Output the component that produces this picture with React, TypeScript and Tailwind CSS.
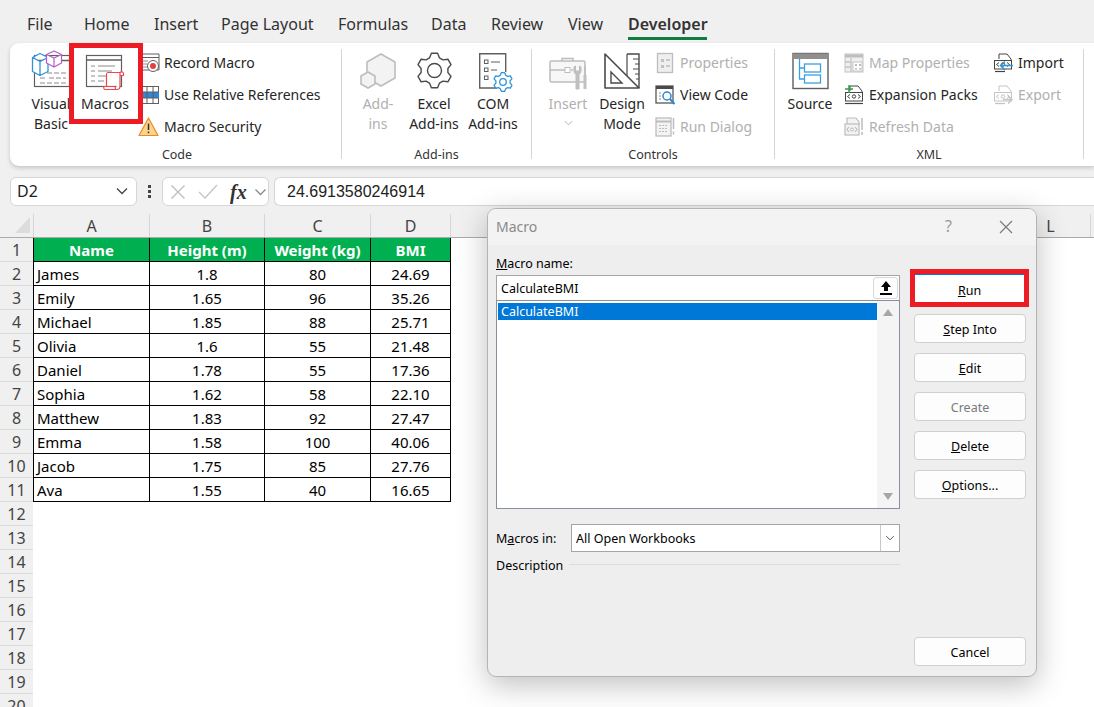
import React from 'react';

const font = "font-['Noto_Sans','Open_Sans',sans-serif]";
const cell = 'h-[24px] pt-[2px] leading-[21px] border-r border-b border-black';

const tabs = [
  { label: 'File', cls: 'w-[57px]' },
  { label: 'Home', cls: 'w-[70px]' },
  { label: 'Insert', cls: 'w-[67px]' },
  { label: 'Page Layout', cls: 'w-[117px]' },
  { label: 'Formulas', cls: 'w-[93px]' },
  { label: 'Data', cls: 'w-[60px]' },
  { label: 'Review', cls: 'w-[77px]' },
  { label: 'View', cls: 'w-[60px]' },
];

const columns = [
  { label: 'A', cls: 'w-[116px]' },
  { label: 'B', cls: 'w-[115px]' },
  { label: 'C', cls: 'w-[106px]' },
  { label: 'D', cls: 'w-[80px]' },
  { label: 'E', cls: 'w-[81px]' },
  { label: 'F', cls: 'w-[80px]' },
  { label: 'G', cls: 'w-[80px]' },
  { label: 'H', cls: 'w-[80px]' },
  { label: 'I', cls: 'w-[80px]' },
  { label: 'J', cls: 'w-[80px]' },
  { label: 'K', cls: 'w-[79px]' },
  { label: 'L', cls: 'w-[80px]' },
];

const people = [
  ['James', '1.8', '80', '24.69'],
  ['Emily', '1.65', '96', '35.26'],
  ['Michael', '1.85', '88', '25.71'],
  ['Olivia', '1.6', '55', '21.48'],
  ['Daniel', '1.78', '55', '17.36'],
  ['Sophia', '1.62', '58', '22.10'],
  ['Matthew', '1.83', '92', '27.47'],
  ['Emma', '1.58', '100', '40.06'],
  ['Jacob', '1.75', '85', '27.76'],
  ['Ava', '1.55', '40', '16.65'],
];

const rowNumbers = Array.from({ length: 20 }, (_, i) => i + 1);

function gearPath(cx: number, cy: number, ro: number, ri: number, n: number): string {
  const pts: string[] = [];
  const step = (Math.PI * 2) / n;
  for (let i = 0; i < n; i++) {
    const a = i * step - Math.PI / 2;
    const list: [number, number][] = [
      [ri, a - step * 0.36],
      [ro, a - step * 0.17],
      [ro, a + step * 0.17],
      [ri, a + step * 0.36],
    ];
    list.forEach(([r, t]) => pts.push(`${(cx + r * Math.cos(t)).toFixed(1)} ${(cy + r * Math.sin(t)).toFixed(1)}`));
  }
  return `M${pts.join('L')}Z`;
}

function Svg({ size = 38, children }: { size?: number; children: React.ReactNode }) {
  return (
    <svg width={size} height={size} viewBox={`0 0 ${size} ${size}`} fill="none" className="overflow-visible shrink-0">
      {children}
    </svg>
  );
}

function VisualBasicIcon() {
  return (
    <Svg>
      <rect x="2.5" y="3.5" width="35" height="31" fill="#fff" stroke="#5f5f5f" strokeWidth="1.2" />
      <path d="M2 8.5h36" stroke="#5f5f5f" strokeWidth="1.5" />
      <path d="M8 21h26M8 26h6M17 26h17M8 31h26" stroke="#8a8a8a" strokeDasharray="5 2" />
      <path d="M8 1.5l8 4v14l-8 4-7.5-4v-14zM.5 5.5l7.5 4 8-4M8 9.5v14" fill="#fff" stroke="#2f94d8" strokeWidth="1.3" strokeLinejoin="round" />
      <path d="M22-1l7.5 3.5v8.5L22 15l-7.5-4V2.5zM14.5 2.5L22 6l7.5-3.5M22 6v9" fill="#fff" stroke="#b35cc8" strokeWidth="1.2" strokeLinejoin="round" />
    </Svg>
  );
}

function MacrosIcon() {
  return (
    <Svg>
      <rect x=".5" y="3.5" width="35" height="31" fill="#fff" stroke="#5f5f5f" strokeWidth="1.2" />
      <path d="M0 8h36" stroke="#5f5f5f" strokeWidth="1.4" />
      <path d="M5 14h4M12 14h17M5 19h4M12 19h14M5 24h4M12 24h8M5 29h4M12 29h6" stroke="#8a8a8a" />
      <path d="M22 20.5h12v3h3.5v-1.5a2 2 0 0 0-3.5-1.5M34 24v10c0 2-1 3.5-3 3.5H19c-1.5 0-1.5-3-.5-3H28c1 0 1.5 1.5 1.5 3M22 20.5c-1 0-1.5 1-1.5 2v12" fill="#fff" stroke="#f0474d" strokeWidth="1.2" strokeLinejoin="round" />
    </Svg>
  );
}

function AddInsIcon() {
  return (
    <Svg>
      <path d="M22 2l14 8v16l-14 8-14-8V10z" fill="#f3f3f3" stroke="#bdbdbd" strokeWidth="1.6" />
      <path d="M9 20l7 4v8l-7 4-7-4v-8z" fill="#f3f3f3" stroke="#bdbdbd" strokeWidth="1.6" />
    </Svg>
  );
}

function GearIcon() {
  return (
    <Svg>
      <path d={gearPath(19.5, 18.5, 17.5, 13.5, 6)} fill="#fff" stroke="#4a4a4a" strokeWidth="1.4" strokeLinejoin="round" />
      <circle cx="19.5" cy="18.5" r="7" fill="#fff" stroke="#4a4a4a" strokeWidth="1.4" />
    </Svg>
  );
}

function ComIcon() {
  return (
    <Svg>
      <path d="M23 36H5.7V1.7h26V20" fill="#fff" stroke="#5f5f5f" strokeWidth="1.4" />
      <path d="M17 10h9M17 18h6" stroke="#5f5f5f" strokeWidth="1.2" />
      <rect x="10.5" y="8" width="3.5" height="3.5" stroke="#5f5f5f" />
      <rect x="10.5" y="16" width="3.5" height="3.5" stroke="#5f5f5f" />
      <rect x="10.5" y="24" width="3.5" height="3.5" stroke="#5f5f5f" />
      <path d={gearPath(29, 30, 9.5, 7.2, 6)} fill="#fff" stroke="#2f94d8" strokeWidth="1.3" strokeLinejoin="round" />
      <circle cx="29" cy="30" r="3.3" stroke="#2f94d8" strokeWidth="1.3" />
    </Svg>
  );
}

function InsertIcon() {
  return (
    <Svg>
      <path d="M13 9V6.5h11V9" stroke="#bdbdbd" strokeWidth="1.5" />
      <rect x="1" y="9" width="35" height="21" rx="1.5" fill="#f7f7f7" stroke="#bdbdbd" strokeWidth="1.5" />
      <path d="M1 18h15M22 18h2" stroke="#bdbdbd" strokeWidth="1.5" />
      <rect x="16" y="15.5" width="5" height="5" fill="#fff" stroke="#bdbdbd" />
      <path d="M25 15v4a3 3 0 0 0 2 3v15h3V22a3 3 0 0 0 2-3v-4l-1.5-1v5h-4v-5z" fill="#c0c0c0" stroke="#bdbdbd" />
      <path d="M35 14h2v9h-2zM34.500 23h3v14h-3z" fill="#c0c0c0" />
    </Svg>
  );
}

function DesignIcon() {
  return (
    <Svg>
      <path d="M24 2h12v34" fill="#fff" stroke="#4a4a4a" strokeWidth="1.4" />
      <path d="M24 2v22M36 7h-6M36 12h-4M36 17h-6M36 22h-4M36 27h-3" stroke="#4a4a4a" strokeWidth="1.2" />
      <path d="M2 2l34 34H2z" fill="#fff" fillOpacity="0.6" stroke="#4a4a4a" strokeWidth="1.6" strokeLinejoin="round" />
      <path d="M8 20l11 11H8z" stroke="#4a4a4a" strokeWidth="1.4" />
    </Svg>
  );
}

function SourceIcon() {
  return (
    <Svg>
      <rect x="2" y="1.500" width="35" height="35" fill="#fff" stroke="#5f5f5f" strokeWidth="1.4" />
      <rect x="2" y="1.500" width="35" height="5.500" fill="#8f8f8f" />
      <path d="M8.500 7v20h5M8.500 16h5" stroke="#3aa0e0" strokeWidth="1.3" />
      <rect x="13.500" y="12" width="16" height="8" fill="#fff" stroke="#3aa0e0" strokeWidth="1.3" />
      <rect x="13.500" y="23" width="16" height="8" fill="#fff" stroke="#3aa0e0" strokeWidth="1.3" />
    </Svg>
  );
}

function RecordIcon() {
  return (
    <Svg size={20}>
      <path d="M2 1h18v16H2z" fill="#fff" stroke="#5f5f5f" />
      <path d="M2 4.500h18" stroke="#5f5f5f" />
      <path d="M4 8h5M4 11h4M4 14h4" stroke="#8a8a8a" />
      <circle cx="14" cy="13" r="5.500" fill="#fff" stroke="#5f5f5f" />
      <circle cx="14" cy="13" r="3" fill="#e5403f" />
    </Svg>
  );
}

function RelativeIcon() {
  return (
    <Svg size={20}>
      <rect x="2.500" y="1.500" width="17" height="17" fill="#fff" stroke="#5f5f5f" />
      <rect x="2" y="7" width="18" height="6" fill="#2f86d6" />
      <path d="M8 1.500v17M14 1.500v17M2.500 7h17M2.500 13h17" stroke="#5f5f5f" />
    </Svg>
  );
}

function WarningIcon() {
  return (
    <Svg size={20}>
      <path d="M9.500 1L19 18.500H0z" fill="#fbd58a" stroke="#e8892b" strokeWidth="1.2" strokeLinejoin="round" />
      <path d="M9.500 6.500v6.500M9.500 14.500v1.800" stroke="#333" strokeWidth="1.500" />
    </Svg>
  );
}

function PropertiesIcon() {
  return (
    <Svg size={20}>
      <rect x="2.500" y="0.500" width="15" height="19" fill="#efefef" stroke="#bdbdbd" strokeWidth="1.300" />
      <path d="M6 6h3v3H6zM6 12h3v3H6z" fill="#c0c0c0" />
      <path d="M11 7h4M11 13h4" stroke="#bdbdbd" strokeWidth="1.300" />
    </Svg>
  );
}

function ViewCodeIcon() {
  return (
    <Svg size={20}>
      <rect x="1" y="1" width="17" height="17" fill="#fff" stroke="#4a4a4a" strokeWidth="1.200" />
      <rect x="1" y="1" width="17" height="3" fill="#4a4a4a" />
      <path d="M4 8h2M4 11h2M4 14h2" stroke="#8a8a8a" />
      <circle cx="12" cy="11" r="4" fill="#fff" stroke="#2f86d6" strokeWidth="1.500" />
      <path d="M15 14l4.500 5" stroke="#2f86d6" strokeWidth="2" />
    </Svg>
  );
}

function RunDialogIcon() {
  return (
    <Svg size={20}>
      <rect x="1" y="1" width="15" height="18" fill="#f3f3f3" stroke="#bdbdbd" strokeWidth="1.300" />
      <path d="M1 4.500h15" stroke="#bdbdbd" strokeWidth="2" />
      <path d="M4 8.500h9M4 11.500h9M4 14.500h9" stroke="#bdbdbd" strokeDasharray="2 1" />
      <path d="M18.500 1v11M18.500 14.500v3" stroke="#bdbdbd" strokeWidth="1.500" />
    </Svg>
  );
}

function MapIcon() {
  return (
    <Svg size={20}>
      <rect x="1" y="1" width="18" height="18" fill="#efefef" stroke="#c4c4c4" />
      <path d="M1 3h18" stroke="#bdbdbd" strokeWidth="3" />
      <path d="M7 5v14M1 9h6M1 14h6" stroke="#c4c4c4" strokeWidth="1.300" />
      <rect x="9" y="9" width="9" height="9" fill="#fff" stroke="#c4c4c4" />
      <path d="M11 11h2v2h-2zM15 11h2v2h-2zM11 15h2v1.500h-2zM15 15h2v1.500h-2z" fill="#bdbdbd" />
    </Svg>
  );
}

function XmlFile({ color }: { color: string }) {
  return (
    <>
      <path d="M6 6V1h8l4 5v2" stroke={color} strokeWidth="1" />
      <rect x="1.500" y="7.500" width="17" height="8.500" fill="#fff" stroke={color} strokeWidth="1" />
      <path d="M6 9.500L3.500 11.500 6 13.500M14 9.500l2.500 2L14 13.500" stroke={color} strokeWidth="1" />
      <circle cx="10" cy="11.500" r="1.700" stroke={color} strokeWidth="1" />
    </>
  );
}

function ExpansionIcon() {
  return (
    <Svg size={20}>
      <XmlFile color="#444" />
      <path d="M1 18.500h18" stroke="#444" strokeWidth="1.200" />
      <path d="M5 0v8M1 4h8" stroke="#2f9e44" strokeWidth="1.500" />
    </Svg>
  );
}

function RefreshIcon() {
  return (
    <Svg size={20}>
      <path d="M3 7V1h9l3 4v3" fill="#f3f3f3" stroke="#bdbdbd" strokeWidth="1.200" />
      <rect x="1" y="7" width="14" height="11" fill="#f3f3f3" stroke="#bdbdbd" strokeWidth="1.200" />
      <path d="M5 10l-2 2.500L5 15M11 10l2 2.500L11 15" stroke="#bdbdbd" strokeWidth="1.200" />
      <circle cx="8" cy="12.500" r="1.500" stroke="#bdbdbd" />
      <path d="M18 1v12M18 15v3" stroke="#bdbdbd" strokeWidth="1.500" />
    </Svg>
  );
}

function ImportIcon() {
  return (
    <Svg size={20}>
      <XmlFile color="#444" />
      <path d="M2 18.500h10" stroke="#444" strokeWidth="1.200" />
      <path d="M20 12.500H8M12 8.500l-4.500 4 4.500 4.500" stroke="#2f94d8" strokeWidth="1.500" />
    </Svg>
  );
}

function ExportIcon() {
  return (
    <Svg size={20}>
      <XmlFile color="#c4c4c4" />
      <path d="M2 18.500h10" stroke="#c4c4c4" strokeWidth="1.300" />
      <path d="M10 14.500h9M15 11l4 3.500-4 4" stroke="#c4c4c4" strokeWidth="1.300" />
    </Svg>
  );
}

function Chevron({ cls }: { cls: string }) {
  return (
    <svg viewBox="0 0 12 8" fill="none" className={cls}>
      <path d="M1 1.500l5 5 5-5" stroke="currentColor" strokeWidth="1.300" />
    </svg>
  );
}

function LargeButton({ lines, icon, cls, disabled }: { lines: string[]; icon: React.ReactNode; cls: string; disabled?: boolean }) {
  return (
    <div className={`flex flex-col items-center pt-[9px] shrink-0 ${cls}`}>
      <div className="h-[38px] w-[38px]">{icon}</div>
      <div className={`mt-[4px] text-center text-[14px] leading-[20px] whitespace-nowrap ${disabled ? 'text-[#b0b0b0]' : 'text-[#262626]'}`}>
        {lines.map((l) => (
          <div key={l}>{l}</div>
        ))}
      </div>
    </div>
  );
}

function SmallButton({ label, icon, disabled }: { label: string; icon: React.ReactNode; disabled?: boolean }) {
  return (
    <div className="flex items-center gap-[5px] h-[32px]">
      <div className="w-[20px] h-[20px] shrink-0">{icon}</div>
      <span className={`pb-[2px] text-[14px] whitespace-nowrap ${disabled ? 'text-[#b0b0b0]' : 'text-[#262626]'}`}>{label}</span>
    </div>
  );
}

function Group({ label, cls, labelCls, children }: { label: string; cls: string; labelCls?: string; children: React.ReactNode }) {
  return (
    <div className={`flex flex-col shrink-0 ${cls}`}>
      <div className="flex h-[102px]">{children}</div>
      <div className={`h-[20px] text-center text-[12.5px] leading-[20px] text-[#333] ${labelCls ?? ''}`}>{label}</div>
    </div>
  );
}

function Separator() {
  return <div className="w-px shrink-0 mt-[6px] mb-[7px] bg-[#d4d4d4]" />;
}

function Ribbon() {
  return (
    <div className="flex h-[123px] ml-[10px] bg-white rounded-l-[9px] shadow-[0_2px_4px_rgba(0,0,0,0.18)] relative z-10">
      <Group label="Code" cls="w-[331px]" labelCls="pl-[3px]">
        <div className="ml-[19px]">
          <LargeButton cls="w-[44px]" lines={['Visual', 'Basic']} icon={<VisualBasicIcon />} />
        </div>
        <div className="relative z-10 -ml-[4px] w-[74px] h-[81px] shrink-0 border-[5px] border-[#ed1c24] bg-white flex justify-center">
          <div className="-mt-[5px] pr-[2px]">
            <LargeButton cls="w-[60px]" lines={['Macros']} icon={<MacrosIcon />} />
          </div>
        </div>
        <div className="-ml-[4px] pt-[4px]">
          <SmallButton label="Record Macro" icon={<RecordIcon />} />
          <SmallButton label="Use Relative References" icon={<RelativeIcon />} />
          <SmallButton label="Macro Security" icon={<WarningIcon />} />
        </div>
      </Group>
      <Separator />
      <Group label="Add-ins" cls="w-[189px]">
        <div className="flex pl-[8px]">
          <LargeButton cls="w-[56px]" disabled lines={['Add-', 'ins']} icon={<AddInsIcon />} />
          <LargeButton cls="w-[56px]" lines={['Excel', 'Add-ins']} icon={<GearIcon />} />
          <LargeButton cls="w-[56px] ml-[3px]" lines={['COM', 'Add-ins']} icon={<ComIcon />} />
        </div>
      </Group>
      <Separator />
      <Group label="Controls" cls="w-[242px]">
        <div className="flex pl-[8px]">
          <div className="w-[56px] relative">
            <LargeButton cls="w-[56px]" disabled lines={['Insert']} icon={<InsertIcon />} />
            <Chevron cls="w-[9px] h-[6px] mx-auto mt-[6px] text-[#b0b0b0]" />
          </div>
          <LargeButton cls="w-[52px]" lines={['Design', 'Mode']} icon={<DesignIcon />} />
          <div className="ml-[7px] pt-[4px]">
            <SmallButton disabled label="Properties" icon={<PropertiesIcon />} />
            <SmallButton label="View Code" icon={<ViewCodeIcon />} />
            <SmallButton disabled label="Run Dialog" icon={<RunDialogIcon />} />
          </div>
        </div>
      </Group>
      <Separator />
      <Group label="XML" cls="w-[308px]">
        <div className="flex pl-[5px]">
          <LargeButton cls="w-[60px]" lines={['Source']} icon={<SourceIcon />} />
          <div className="ml-[4px] w-[149px] pt-[4px]">
            <SmallButton disabled label="Map Properties" icon={<MapIcon />} />
            <SmallButton label="Expansion Packs" icon={<ExpansionIcon />} />
            <SmallButton disabled label="Refresh Data" icon={<RefreshIcon />} />
          </div>
          <div className="pt-[4px]">
            <SmallButton label="Import" icon={<ImportIcon />} />
            <SmallButton disabled label="Export" icon={<ExportIcon />} />
          </div>
        </div>
      </Group>
      <Separator />
    </div>
  );
}

function FormulaBar() {
  return (
    <div className="flex h-[29px] mt-[11px] pl-[10px]">
      <div className="w-[127px] flex items-center justify-between pl-[6px] pr-[8px] pb-[1px] bg-white border border-[#d6d6d6] rounded-[6px] text-[16px] text-[#222]">
        D2
        <Chevron cls="w-[12px] h-[8px] text-[#444]" />
      </div>
      <div className="w-[25px] flex flex-col items-center justify-center gap-[2px]">
        <div className="w-[3px] h-[3px] bg-[#444]" />
        <div className="w-[3px] h-[3px] bg-[#444]" />
        <div className="w-[3px] h-[3px] bg-[#444]" />
      </div>
      <div className="w-[107px] flex items-center pl-[7px] bg-white border border-[#d6d6d6] rounded-[6px]">
        <svg width="16" height="16" viewBox="0 0 16 16" fill="none">
          <path d="M1.500 1.500l13 13M14.500 1.500l-13 13" stroke="#bdbdbd" strokeWidth="1.300" />
        </svg>
        <svg width="20" height="15" viewBox="0 0 20 15" fill="none" className="ml-[12px]">
          <path d="M1 8l6 6L19 1" stroke="#c4c4c4" strokeWidth="1.300" />
        </svg>
        <span className="ml-[12px] font-['Liberation_Serif',serif] italic font-bold text-[20px] leading-none text-[#333]">fx</span>
        <Chevron cls="w-[13px] h-[8px] ml-[7px] text-[#888]" />
      </div>
      <div className="flex-1 ml-[5px] flex items-center pl-[12px] bg-white border-t border-b border-l border-[#d6d6d6] rounded-l-[6px] font-['Liberation_Sans',sans-serif] text-[16px] text-[#222]">
        24.6913580246914
      </div>
    </div>
  );
}

function Sheet() {
  return (
    <div className="flex-1 flex flex-col min-h-0">
      {/* column headers */}
      <div className="flex items-end h-[32px] shrink-0 border-b border-[#ababab]">
        <div className="w-[34px] h-[23px] shrink-0 pl-[15px] pt-[3px] border-r border-[#d6d6d6]">
          <svg width="15" height="16" viewBox="0 0 15 16"><path d="M15 0v16H0z" fill="#dcdcdc" /></svg>
        </div>
        {columns.map((c) => (
          <div key={c.label} className={`h-[23px] shrink-0 pt-[1px] text-center text-[16px] leading-[22px] text-[#444] border-r border-[#d6d6d6] ${c.cls}`}>
            {c.label}
          </div>
        ))}
      </div>
      <div className="flex flex-1 min-h-0">
        <div className="w-[34px] shrink-0 bg-[#f0f0f0] border-r border-[#ababab]">
          {rowNumbers.map((n) => (
            <div key={n} className="h-[24px] text-center text-[16px] leading-[24px] text-[#444] border-b border-[#dcdcdc]">
              {n}
            </div>
          ))}
        </div>
        <div className="relative flex-1 -ml-px bg-white">
          <div className="w-[418px] border-l border-black text-[15px] text-black">
            <div className="grid grid-cols-[116px_115px_106px_80px] bg-[#00b050] text-white font-bold text-center">
              <div className={cell}>Name</div>
              <div className={cell}>Height (m)</div>
              <div className={cell}>Weight (kg)</div>
              <div className={cell}>BMI</div>
            </div>
            {people.map((p) => (
              <div key={p[0]} className="grid grid-cols-[116px_115px_106px_80px] text-center">
                <div className={`${cell} text-left pl-[3px]`}>{p[0]}</div>
                <div className={cell}>{p[1]}</div>
                <div className={cell}>{p[2]}</div>
                <div className={cell}>{p[3]}</div>
              </div>
            ))}
          </div>
        </div>
      </div>
    </div>
  );
}

function DialogButton({ children, disabled }: { children: React.ReactNode; disabled?: boolean }) {
  return (
    <div className={`w-[112px] h-[29px] flex items-center justify-center pt-[3px] bg-[#fdfdfd] border border-[#d0d0d0] rounded-[4px] text-[12.5px] ${disabled ? 'text-[#7a7a7a]' : 'text-black'}`}>
      {children}
    </div>
  );
}

function MacroDialog() {
  return (
    <div className="absolute left-[487px] top-[208px] z-20 w-[550px] h-[469px] flex flex-col overflow-hidden rounded-[9px] border border-[#b4b4b4] bg-[#eeeeee] shadow-[0_8px_30px_rgba(0,0,0,0.25)]">
      <div className="h-[36px] shrink-0 flex items-center pl-[8px] bg-[#f3f3f3]">
        <span className="pb-[2px] text-[14px] text-[#8a8a8a]">Macro</span>
        <span className="ml-auto pb-[2px] text-[16px] text-[#9a9a9a]">?</span>
        <svg width="14" height="14" viewBox="0 0 14 14" fill="none" className="ml-[47px] mr-[23px]">
          <path d="M1 1l12 12M13 1L1 13" stroke="#777" strokeWidth="1.100" />
        </svg>
      </div>
      <div className="flex-1 flex gap-[14px] pl-[8px] pb-[10px] min-h-0">
        <div className="w-[404px] shrink-0">
          <div className="pt-[11px] h-[30px] text-[12.5px] leading-[16px] text-black">
            <span className="underline">M</span>acro name:
          </div>
          <div className="h-[26px] flex items-center bg-white border border-[#a5a5a5] pl-[4px] pr-[1px] text-[12.5px] text-black">
            <span className="pt-[2px]">CalculateBMI</span>
            <div className="ml-auto w-[25px] h-[22px] flex items-center justify-center bg-[#fdfdfd] border border-[#d8d8d8] rounded-[3px]">
              <svg width="12" height="14" viewBox="0 0 12 14">
                <path d="M6 0l5 6H8v4H4V6H1zM0 12h12v2H0z" fill="#000" />
              </svg>
            </div>
          </div>
          <div className="h-[209px] flex -mt-px bg-white border border-[#8a8f9c]">
            <div className="flex-1 pt-[2px] pl-[1px]">
              <div className="h-[17px] flex items-center pl-[3px] pt-[2px] bg-[#0078d7] text-[12.5px] text-white">CalculateBMI</div>
            </div>
            <div className="w-[22px] shrink-0 flex flex-col items-center justify-between py-[8px] bg-[#f4f4f4]">
              <svg width="10" height="7" viewBox="0 0 10 7"><path d="M5 0l5 7H0z" fill="#a6a6a6" /></svg>
              <svg width="10" height="7" viewBox="0 0 10 7"><path d="M5 7l5-7H0z" fill="#a6a6a6" /></svg>
            </div>
          </div>
          <div className="flex items-center mt-[15px] h-[28px] text-[12.5px] text-black">
            <div className="w-[75px] shrink-0 pt-[2px]">
              M<span className="underline">a</span>cros in:
            </div>
            <div className="flex-1 h-[28px] flex items-center pl-[4px] bg-white border border-[#a5a5a5]">
              <span className="pt-[2px]">All Open Workbooks</span>
              <div className="ml-auto h-[26px] w-[19px] flex items-center justify-center bg-white border-l border-[#c8c8c8]">
                <Chevron cls="w-[10px] h-[6px] text-[#555]" />
              </div>
            </div>
          </div>
          <div className="flex mt-[4px] h-[18px] text-[12.5px] text-black">
            <span className="pt-[1px] leading-[18px]">Description</span>
            <div className="flex-1 h-px mt-[8px] ml-[6px] bg-[#dcdcdc]" />
          </div>
        </div>
        <div className="w-[112px] shrink-0 flex flex-col pt-[24px]">
          <div className="relative -ml-[4px] w-[119px] h-[38px] shrink-0 border-[5px] border-[#ed1c24] bg-white">
            <div className="h-full flex items-center justify-center pt-[5px] border-t border-[#0078d7] text-[12.5px] text-black">
              <span><span className="underline">R</span>un</span>
            </div>
          </div>
          <div className="flex flex-col gap-[10px] mt-[7px]">
            <DialogButton><span><span className="underline">S</span>tep Into</span></DialogButton>
            <DialogButton><span><span className="underline">E</span>dit</span></DialogButton>
            <DialogButton disabled>Create</DialogButton>
            <DialogButton><span><span className="underline">D</span>elete</span></DialogButton>
            <DialogButton><span><span className="underline">O</span>ptions...</span></DialogButton>
          </div>
          <div className="mt-auto">
            <DialogButton>Cancel</DialogButton>
          </div>
        </div>
      </div>
    </div>
  );
}

export default function App() {
  return (
    <div className={`relative w-[1094px] h-[707px] overflow-hidden flex flex-col bg-[#f0f0f0] ${font}`}>
      <div className="flex h-[43px] shrink-0 pl-[27px] text-[16px] text-[#333]">
        {tabs.map((t) => (
          <div key={t.label} className={`shrink-0 pt-[13px] leading-[22px] whitespace-nowrap ${t.cls}`}>
            {t.label}
          </div>
        ))}
        <div className="relative shrink-0 w-[79px] pt-[13px] leading-[22px] font-semibold whitespace-nowrap">
          Developer
          <div className="absolute left-0 right-0 top-[37px] h-[3px] bg-[#107c41]" />
        </div>
      </div>
      <Ribbon />
      <FormulaBar />
      <Sheet />
      <MacroDialog />
    </div>
  );
}
